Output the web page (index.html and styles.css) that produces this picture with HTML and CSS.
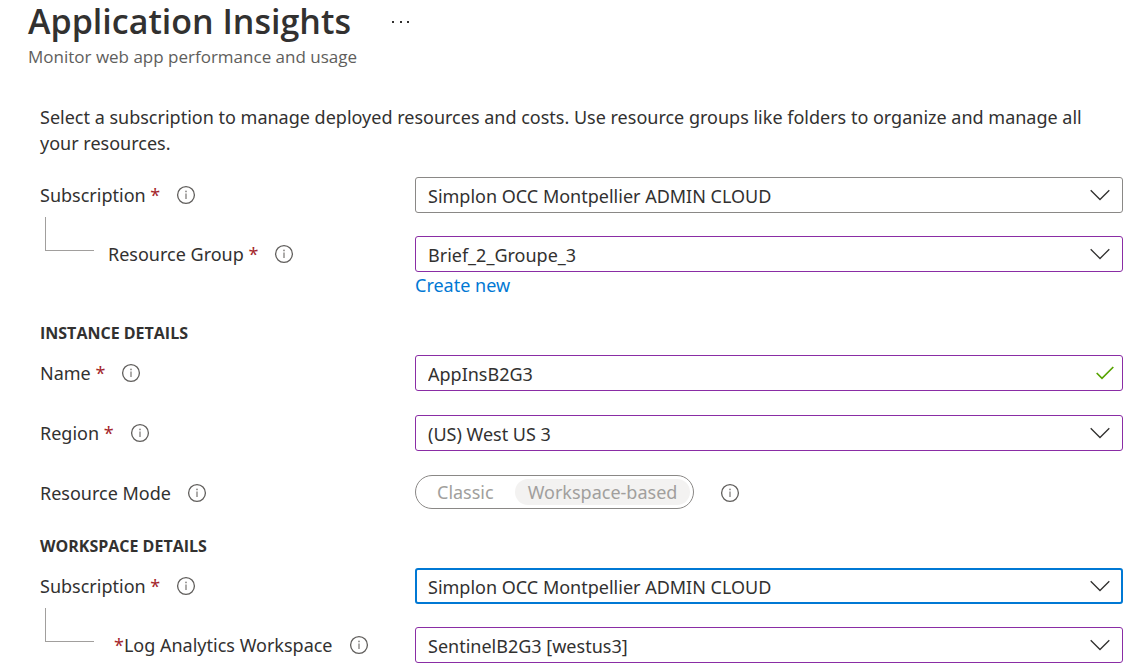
FILE: index.html
```html
<!DOCTYPE html>
<html lang="en">
<head>
<meta charset="utf-8">
<meta name="viewport" content="width=device-width, initial-scale=1">
<title>Application Insights</title>
<link rel="stylesheet" href="styles.css">
</head>
<body>
<svg class="sprite" aria-hidden="true">
  <symbol id="info" viewBox="0 0 20 20"><circle cx="10" cy="10" r="8.4" fill="none" stroke="#605e5c" stroke-width="1.3"/><path d="M10 8.6V14" stroke="#8a8886" stroke-width="1.4"/><circle cx="10" cy="6.4" r=".9" fill="#8a8886"/></symbol>
  <symbol id="chevron" viewBox="0 0 20 12"><path d="M.7 1.2 10 10.5l9.300-9.300" fill="none" stroke="#323130" stroke-width="1.3"/></symbol>
</svg>
<header class="page-header">
  <div class="title-row">
    <h1 class="title">Application Insights</h1>
    <button class="more" type="button" aria-label="More options"><svg class="more-icon" viewBox="0 0 18 4"><path d="M0 1h2v2H0zM8 1h2v2H8zM15 1h2v2h-2z" fill="#323130"/></svg></button>
  </div>
  <p class="subtitle">Monitor web app performance and usage</p>
</header>
<main>
<form class="form">
  <p class="intro">Select a subscription to manage deployed resources and costs. Use resource groups like folders to organize and manage all your resources.</p>
  <section class="section">
    <div class="row">
      <div class="label"><label for="sub">Subscription <span class="required">*</span></label><svg class="info"><use href="#info"/></svg></div>
      <div class="control"><select id="sub" class="field"><option>Simplon OCC Montpellier ADMIN CLOUD</option></select><svg class="chevron"><use href="#chevron"/></svg></div>
    </div>
    <div class="row">
      <div class="label"><span class="branch"></span><label for="group">Resource Group <span class="required">*</span></label><svg class="info"><use href="#info"/></svg></div>
      <div class="control"><select id="group" class="field edited"><option>Brief_2_Groupe_3</option></select><svg class="chevron"><use href="#chevron"/></svg></div>
      <a class="create" href="#new">Create new</a>
    </div>
  </section>
  <h2 class="heading">INSTANCE DETAILS</h2>
  <section class="section instance">
    <div class="row">
      <div class="label"><label for="name">Name <span class="required">*</span></label><svg class="info"><use href="#info"/></svg></div>
      <div class="control"><input id="name" class="field edited" type="text" value="AppInsB2G3"><svg class="check" viewBox="0 0 18 14"><path d="M.7 7 6 12.300 17.300 1" fill="none" stroke="#57a300" stroke-width="1.700"/></svg></div>
    </div>
    <div class="row">
      <div class="label"><label for="region">Region <span class="required">*</span></label><svg class="info"><use href="#info"/></svg></div>
      <div class="control"><select id="region" class="field edited"><option>(US) West US 3</option></select><svg class="chevron"><use href="#chevron"/></svg></div>
    </div>
    <div class="row">
      <div class="label"><span id="mode">Resource Mode</span><svg class="info"><use href="#info"/></svg></div>
      <div class="mode">
        <div class="toggle" role="radiogroup" aria-labelledby="mode">
          <label class="choice"><input class="radio" type="radio" name="mode" disabled>Classic</label>
          <label class="choice selected"><input class="radio" type="radio" name="mode" checked disabled>Workspace-based</label>
        </div>
        <svg class="info"><use href="#info"/></svg>
      </div>
    </div>
  </section>
  <h2 class="heading">WORKSPACE DETAILS</h2>
  <section class="section">
    <div class="row">
      <div class="label"><label for="wsub">Subscription <span class="required">*</span></label><svg class="info"><use href="#info"/></svg></div>
      <div class="control"><select id="wsub" class="field focused"><option>Simplon OCC Montpellier ADMIN CLOUD</option></select><svg class="chevron"><use href="#chevron"/></svg></div>
    </div>
    <div class="row">
      <div class="label"><span class="branch wide"></span><label for="log"><span class="required">*</span>Log Analytics Workspace</label><svg class="info"><use href="#info"/></svg></div>
      <div class="control"><select id="log" class="field edited"><option>SentinelB2G3 [westus3]</option></select><svg class="chevron"><use href="#chevron"/></svg></div>
    </div>
  </section>
</form>
</main>
</body>
</html>
```
FILE: styles.css
```css
* { box-sizing: border-box; }
body {
  margin: 0;
  background: #fff;
  color: #323130;
  font: 18px/26px "Noto Sans", "Open Sans", sans-serif;
}
h1, h2, p { margin: 0; }
.sprite { position: absolute; width: 0; height: 0; }
.page-header { padding-left: 28px; }
.title-row { display: flex; align-items: center; gap: 41px; }
.title { font-family: "Open Sans", sans-serif; font-size: 34px; line-height: 43px; font-weight: 600; }
.more { display: flex; padding: 0; border: 0; background: none; }
.more-icon { width: 18px; height: 4px; }
.subtitle { padding-top: 1px; color: #605e5c; font-family: "Open Sans", sans-serif; font-size: 17px; line-height: 26px; }
.form { padding: 34px 5px 2px 40px; }
.intro { margin-bottom: 21px; }
.section { display: grid; gap: 23px; }
.instance { gap: 24px; }
.row { display: grid; grid-template-columns: 375px minmax(0, 1fr); }
.label { display: flex; align-items: center; height: 36px; white-space: nowrap; }
.required { color: #a4262c; }
.info { flex: none; width: 20px; height: 20px; margin-left: 16px; }
.branch {
  align-self: flex-start;
  width: 49px;
  height: 34px;
  margin: -19px 14px 0 5px;
  border: solid #a19f9d;
  border-width: 0 0 1px 1px;
}
.wide { margin-right: 20px; }
.control { position: relative; }
.field {
  display: block;
  width: 100%;
  height: 36px;
  padding: 1px 44px 0 12px;
  border: 1px solid #8a8886;
  border-radius: 3px;
  outline: 0;
  appearance: none;
  background: #fff;
  color: inherit;
  font: inherit;
}
.edited { border-color: #8a2da5; }
.focused { border: 2px solid #0078d4; padding-left: 11px; }
.chevron, .check { position: absolute; pointer-events: none; }
.chevron { top: 12px; right: 13px; width: 20px; height: 12px; }
.check { top: 11px; right: 9px; width: 18px; height: 14px; }
.create { grid-column: 2; justify-self: start; line-height: 26px; color: #0078d4; text-decoration: none; }
.heading { margin: 23px 0 10px; font-family: "Open Sans", sans-serif; font-size: 16px; line-height: 24px; font-weight: 700; }
.mode { display: flex; align-items: center; gap: 10px; }
.toggle {
  display: flex;
  align-self: flex-start;
  height: 34px;
  padding: 3px;
  border: 1px solid #8a8886;
  border-radius: 17px;
  color: #a19f9d;
}
.choice { padding: 0 13px; line-height: 26px; border-radius: 14px; }
.choice:first-child { padding: 0 21px 0 18px; }
.selected { background: #f3f2f1; }
.radio { position: absolute; margin: 0; opacity: 0; }
```
